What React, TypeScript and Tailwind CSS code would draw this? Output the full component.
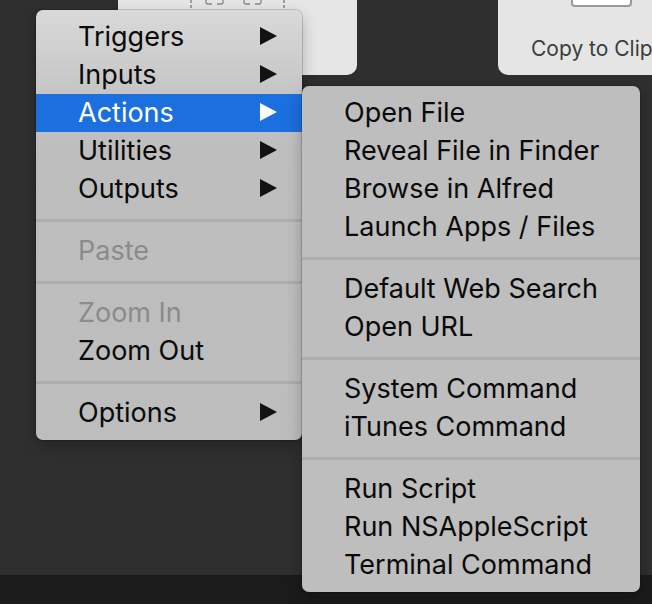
import { Fragment } from 'react';

type Entry = { label: string; sub?: boolean; active?: boolean; disabled?: boolean } | 'sep';

const MAIN_MENU: Entry[] = [
    { label: 'Triggers', sub: true },
    { label: 'Inputs', sub: true },
    { label: 'Actions', sub: true, active: true },
    { label: 'Utilities', sub: true },
    { label: 'Outputs', sub: true },
    'sep',
    { label: 'Paste', disabled: true },
    'sep',
    { label: 'Zoom In', disabled: true },
    { label: 'Zoom Out' },
    'sep',
    { label: 'Options', sub: true },
];

const ACTIONS_MENU: Entry[] = [
    { label: 'Open File' },
    { label: 'Reveal File in Finder' },
    { label: 'Browse in Alfred' },
    { label: 'Launch Apps / Files' },
    'sep',
    { label: 'Default Web Search' },
    { label: 'Open URL' },
    'sep',
    { label: 'System Command' },
    { label: 'iTunes Command' },
    'sep',
    { label: 'Run Script' },
    { label: 'Run NSAppleScript' },
    { label: 'Terminal Command' },
];

const FONT = "font-['Inter','Liberation_Sans',sans-serif]";

function Arrow({ white }: { white?: boolean }) {
    return (
        <svg width="17" height="18" viewBox="0 0 17 18">
            <polygon points="0,0 17,9 0,18" fill={white ? '#ffffff' : '#121212'} />
        </svg>
    );
}

function MenuRows({ entries }: { entries: Entry[] }) {
    return (
        <>
            {entries.map((e, i) => {
                if (e === 'sep') {
                    return (
                        <div key={i} className="h-[24px] flex items-center">
                            <div className="h-[3px] w-full bg-[#adadad]" />
                        </div>
                    );
                }
                const color = e.active ? 'text-white' : e.disabled ? 'text-[#8b8b8b]' : 'text-[#0a0a0a]';
                return (
                    <div
                        key={i}
                        className={`h-[38px] flex items-center justify-between pl-[42px] pr-[25px] pb-[2px] ${e.active ? 'bg-[#1b6fdf]' : ''}`}
                    >
                        <span className={`text-[27px] leading-none ${color}`}>{e.label}</span>
                        {e.sub && <Arrow white={e.active} />}
                    </div>
                );
            })}
        </>
    );
}

export default function App() {
    return (
        <div className={`relative w-[652px] h-[604px] overflow-hidden bg-[#2f2f2f] ${FONT}`}>
            {/* background windows */}
            <div className="flex flex-col h-full">
                <div className="flex h-[75px]">
                    <div className="ml-[118px] w-[239px] h-full bg-[#e6e6e6] rounded-b-[10px]">
                        <svg width="96" height="10" viewBox="0 0 96 10" className="ml-[72px]">
                            <line x1="1" y1="0" x2="1" y2="9" stroke="#888" strokeWidth="1.5" strokeDasharray="3 2" />
                            <line x1="94" y1="0" x2="94" y2="9" stroke="#888" strokeWidth="1.5" strokeDasharray="3 2" />
                            <path d="M16 0 v2 a2 2 0 0 0 2 2 h4 M33 0 v2 a2 2 0 0 1 -2 2 h-4" stroke="#888" strokeWidth="1.3" fill="none" />
                            <path d="M54 0 v2 a2 2 0 0 0 2 2 h4 M71 0 v2 a2 2 0 0 1 -2 2 h-4" stroke="#888" strokeWidth="1.3" fill="none" />
                        </svg>
                    </div>
                    <div className="ml-[141px] flex-1 h-full bg-[#e5e5e5] rounded-bl-[10px] overflow-hidden">
                        <div className="ml-[73px] w-[61px] h-[7px] bg-white border-2 border-t-0 border-[#9a9a9a] rounded-b-[4px]" />
                        <div className="ml-[33px] mt-[31px] text-[21px] leading-none text-[#3c3c3c] whitespace-nowrap">
                            Copy to Clipboard
                        </div>
                    </div>
                </div>
                <div className="flex-1" />
                <div className="h-[29px] bg-[#1b1b1b]" />
            </div>

            {/* main context menu */}
            <div className="absolute left-[36px] top-[10px] w-[266px] py-[8px] rounded-[7px] bg-[linear-gradient(to_bottom,#d9d9d9_0px,#c6c6c6_80px,#bebebe_140px,#bdbdbd_100%)] shadow-[0_0_0_1px_rgba(0,0,0,0.15),0_6px_16px_rgba(0,0,0,0.25)]">
                <MenuRows entries={MAIN_MENU} />
            </div>

            {/* Actions submenu */}
            <div className="absolute left-[302px] top-[86px] w-[338px] py-[8px] rounded-[7px] bg-[#bebebe] shadow-[0_0_0_1px_rgba(0,0,0,0.15),0_6px_16px_rgba(0,0,0,0.25)]">
                <MenuRows entries={ACTIONS_MENU} />
            </div>
        </div>
    );
}
